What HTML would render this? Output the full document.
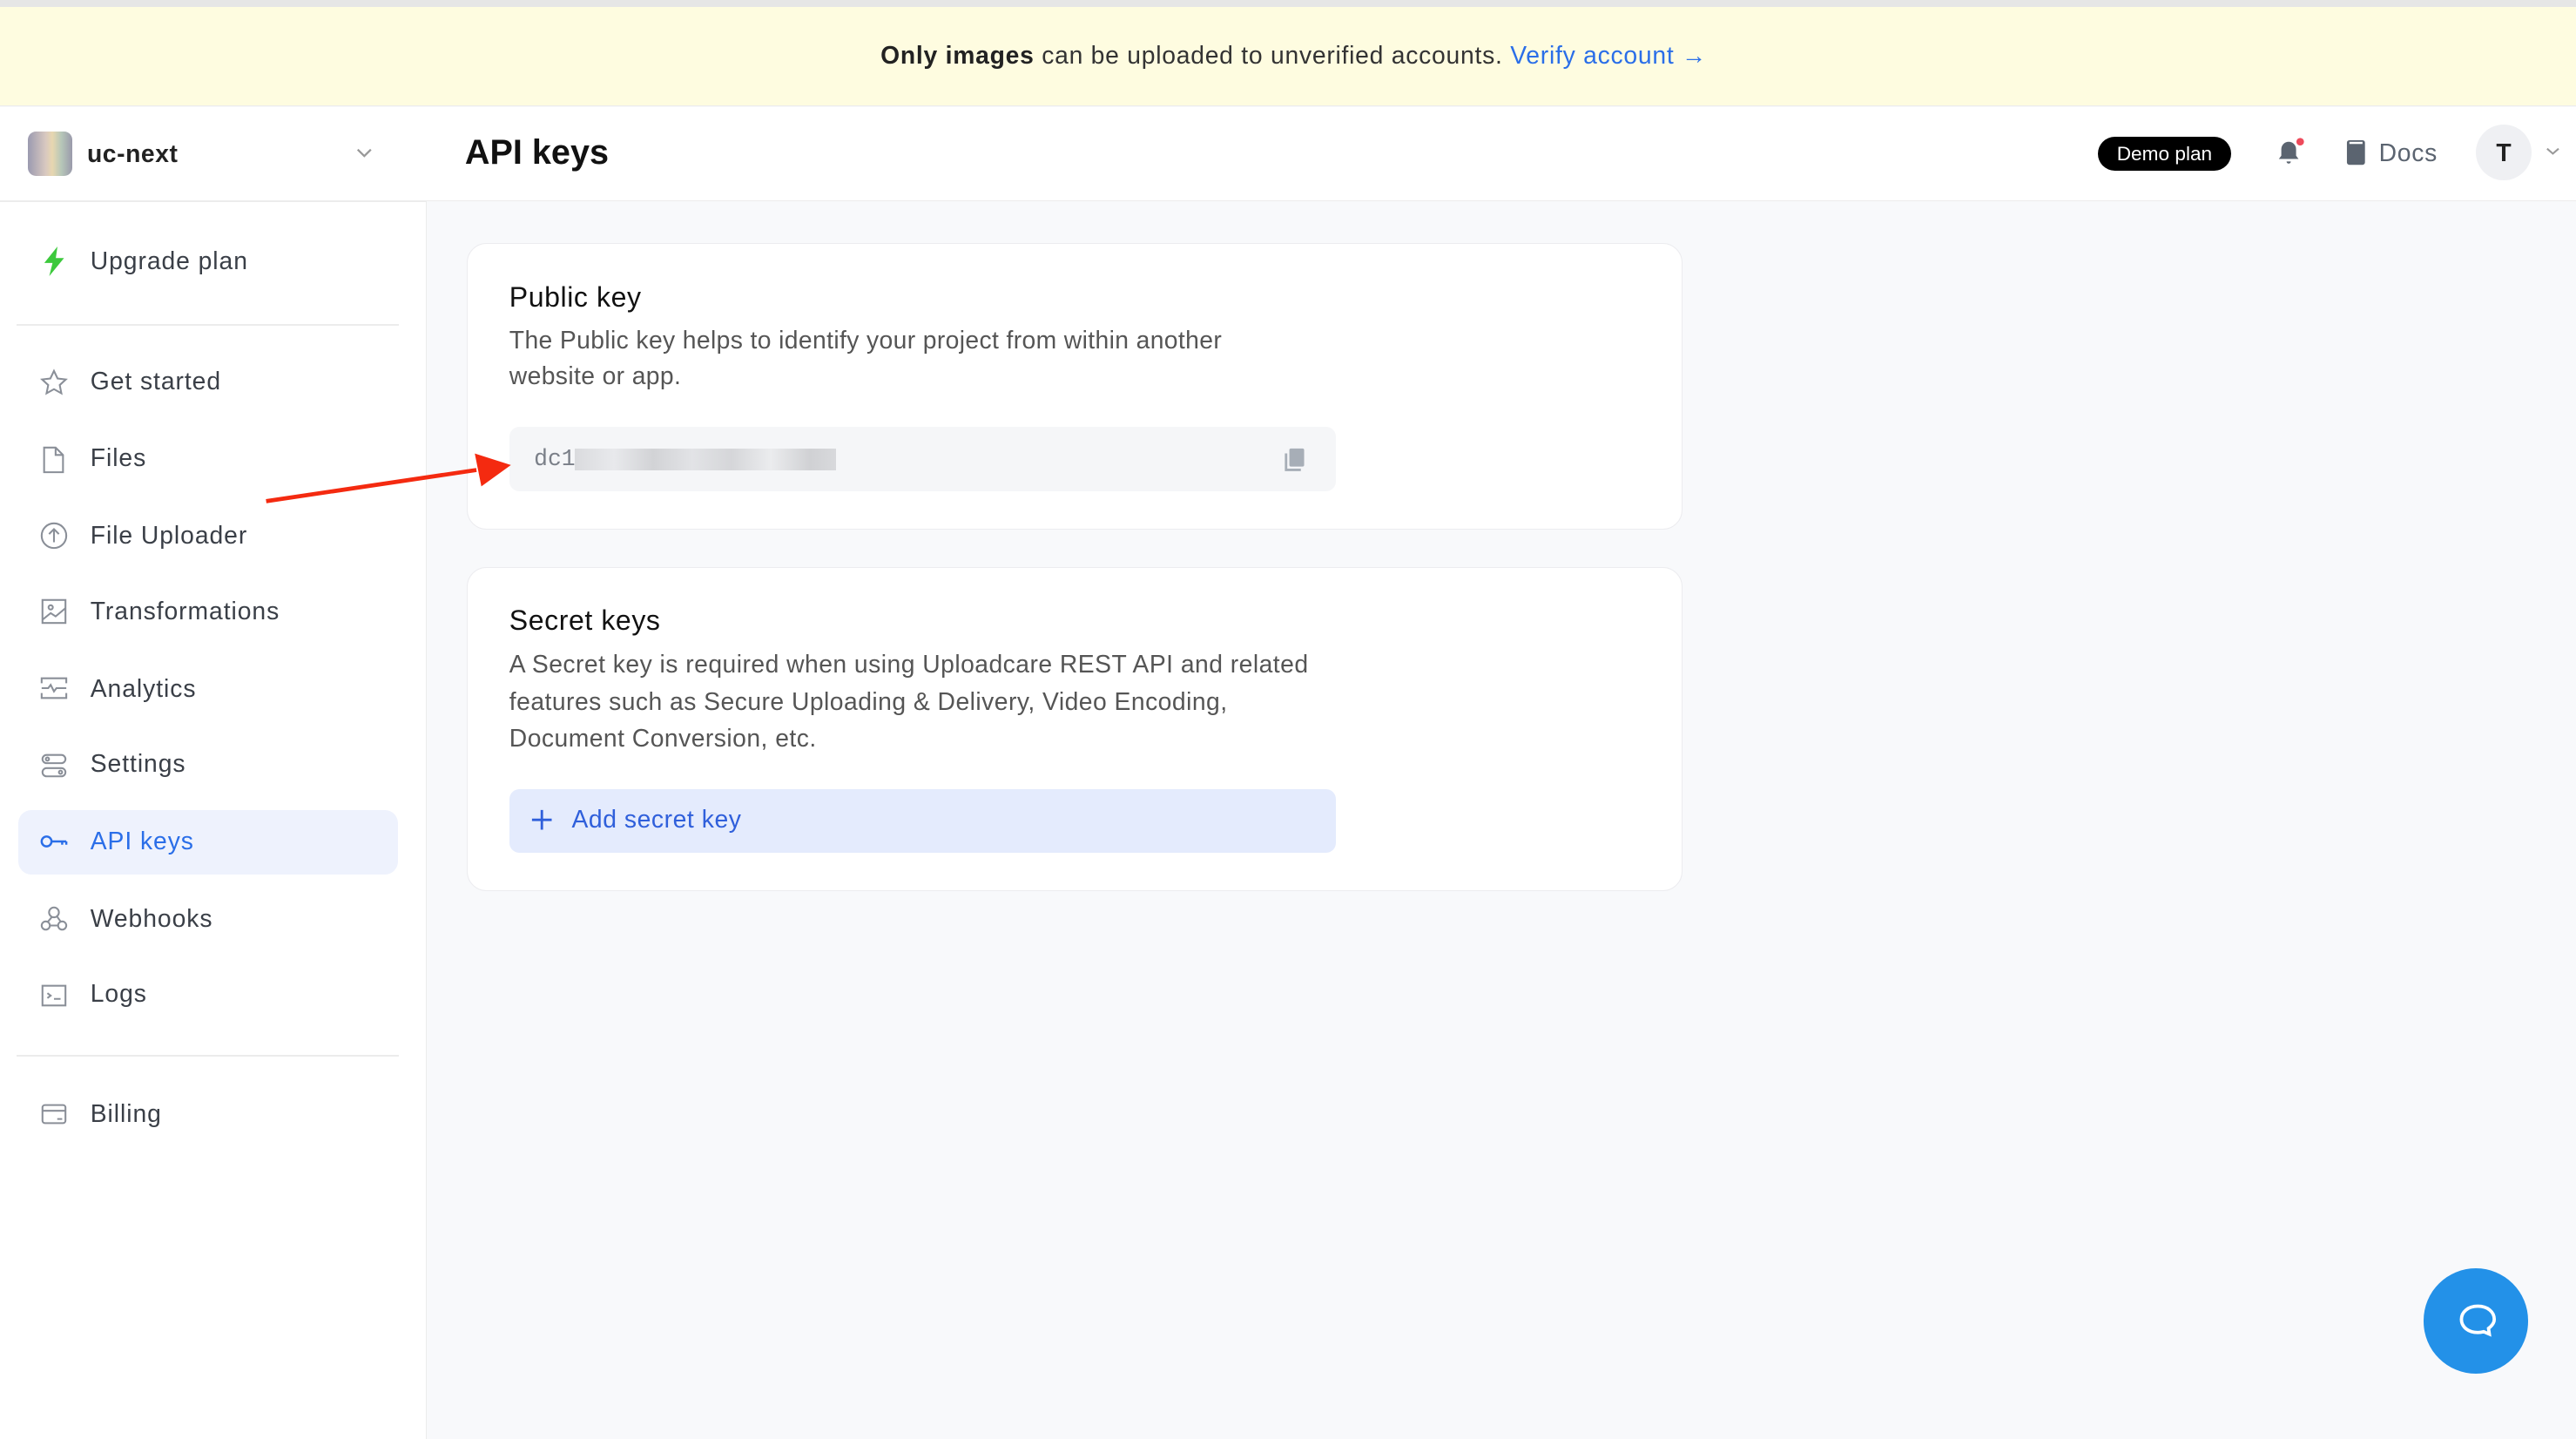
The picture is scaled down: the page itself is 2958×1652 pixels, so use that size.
<!DOCTYPE html>
<html><head><meta charset="utf-8"><style>
html,body{margin:0;padding:0;width:2958px;height:1652px;overflow:hidden;background:#f8f9fb}
#w{zoom:1.88648;width:1568px;height:876px;position:relative;font-family:"Liberation Sans",sans-serif;color:#333;background:#f8f9fb}
.a{position:absolute}
.nav{position:absolute;left:55px;font-size:15px;color:#3a3f47;line-height:20px;letter-spacing:0.5px}
.ic{position:absolute;left:24px;width:18px;height:18px}
.card{position:absolute;left:284px;width:739px;background:#fff;border:1px solid #ececef;border-radius:12px}
</style></head><body><div id="w">
<div class="a" style="left:0;top:0;width:1568px;height:4px;background:#e6e6e6"></div>
<div class="a" style="left:0;top:4px;width:1568px;height:60px;background:#fefce0;border-bottom:1px solid #ececec"></div>
<div class="a" style="left:0;top:24px;width:1575px;text-align:center;font-size:15px;line-height:20px;color:#333;letter-spacing:0.4px"><b style="color:#222">Only images</b> can be uploaded to unverified accounts. <span style="color:#2a6ee8">Verify account →</span></div>

<div class="a" style="left:0;top:65px;width:259px;height:811px;background:#fff;border-right:1px solid #ececec"></div>
<div class="a" style="left:259px;top:65px;width:1309px;height:57px;background:#fff;border-bottom:1px solid #ececec"></div>
<div class="a" style="left:0;top:122px;width:259px;height:1px;background:#ececec"></div>

<div class="a" style="left:17px;top:80px;width:27px;height:27px;border-radius:5px;background:linear-gradient(90deg,#9b9ab0,#d8c8c0 40%,#e8d7b0 55%,#b7c7b8 75%,#9a9aab)"></div>
<div class="a" style="left:53px;top:84px;font-size:15px;font-weight:bold;color:#222;line-height:20px;letter-spacing:0.3px">uc-next</div>
<svg class="a" style="left:216px;top:88px" width="12" height="10" viewBox="0 0 12 10"><path d="M2 3l4 4 4-4" fill="none" stroke="#999" stroke-width="1.2"/></svg>

<svg class="a" style="left:26px;top:150px" width="15" height="18" viewBox="0 0 15 18"><path d="M9 0L1 10h5l-2 8 9-11H8z" fill="#3cc93c"/></svg>
<div class="nav" style="top:149px">Upgrade plan</div>
<div class="a" style="left:10px;top:197px;width:233px;height:1px;background:#ececec"></div>

<div class="a" style="left:11px;top:493px;width:231px;height:39px;background:#eef2fd;border-radius:8px"></div>

<svg class="ic" style="top:224px" viewBox="0 0 18 18" fill="none" stroke="#8a8f98" stroke-width="1.1"><path d="M9 1.5l2.2 4.6 5 .6-3.7 3.4 1 5L9 12.6 4.5 15.1l1-5L1.8 6.7l5-.6z"/></svg>
<div class="nav" style="top:222px">Get started</div>
<svg class="ic" style="top:271px" viewBox="0 0 18 18" fill="none" stroke="#8a8f98" stroke-width="1.1"><path d="M3 1.5h7l4.5 4.5v10.5H3z M10 1.5v4.5h4.5"/></svg>
<div class="nav" style="top:269px">Files</div>
<svg class="ic" style="top:317px" viewBox="0 0 18 18" fill="none" stroke="#8a8f98" stroke-width="1.1"><circle cx="9" cy="9" r="7.5"/><path d="M9 13V5M6 8l3-3 3 3"/></svg>
<div class="nav" style="top:316px">File Uploader</div>
<svg class="ic" style="top:363px" viewBox="0 0 18 18" fill="none" stroke="#8a8f98" stroke-width="1.1"><rect x="2" y="2" width="14" height="14"/><circle cx="7" cy="6.5" r="1.3"/><path d="M2 14l5-4 3 2 6-5"/></svg>
<div class="nav" style="top:362px">Transformations</div>
<svg class="ic" style="top:410px" viewBox="0 0 18 18" fill="none" stroke="#8a8f98" stroke-width="1.1"><path d="M1.5 6V3h15v3M1.5 12v3h15v-3M1.5 9h4l1.5-2 2 4 1.5-2h6"/></svg>
<div class="nav" style="top:409px">Analytics</div>
<svg class="ic" style="top:457px" viewBox="0 0 18 18" fill="none" stroke="#8a8f98" stroke-width="1.1"><rect x="2" y="2.5" width="14" height="5" rx="2.5"/><rect x="2" y="10.5" width="14" height="5" rx="2.5"/><circle cx="5" cy="5" r="1"/><circle cx="13" cy="13" r="1"/></svg>
<div class="nav" style="top:455px">Settings</div>
<svg class="ic" style="top:503px" viewBox="0 0 18 18" fill="none" stroke="#2a6ee8" stroke-width="1.3"><circle cx="4.5" cy="9" r="3"/><path d="M7.5 9h9M14 9v2M16.5 9v2"/></svg>
<div class="nav" style="top:502px;color:#2a6ee8">API keys</div>
<svg class="ic" style="top:550px" viewBox="0 0 18 18" fill="none" stroke="#8a8f98" stroke-width="1.1"><circle cx="9" cy="5" r="3"/><circle cx="4" cy="13" r="2.5"/><circle cx="14" cy="13" r="2.5"/><path d="M8 7.5L5 11M10.5 7L13 10.5M6.5 13h5"/></svg>
<div class="nav" style="top:549px">Webhooks</div>
<svg class="ic" style="top:597px" viewBox="0 0 18 18" fill="none" stroke="#8a8f98" stroke-width="1.1"><rect x="2" y="3" width="14" height="12"/><path d="M5 7.5l2 1.5-2 1.5M9 11h4"/></svg>
<div class="nav" style="top:595px">Logs</div>
<div class="a" style="left:10px;top:642px;width:233px;height:1px;background:#ececec"></div>
<svg class="ic" style="top:669px" viewBox="0 0 18 18" fill="none" stroke="#8a8f98" stroke-width="1.1"><rect x="2" y="3.5" width="14" height="11" rx="1.5"/><path d="M2 7h14M11 12h3"/></svg>
<div class="nav" style="top:668px">Billing</div>

<div class="a" style="left:283px;top:80px;font-size:21px;font-weight:bold;color:#111;line-height:26px">API keys</div>
<div class="a" style="left:1277px;top:83px;width:81px;height:21px;background:#000;border-radius:11px;color:#fff;font-size:12px;line-height:21px;text-align:center">Demo plan</div>
<svg class="a" style="left:1385px;top:84px" width="18" height="18" viewBox="0 0 18 18"><path d="M8 2.5a4.5 4.5 0 0 0-4.5 4.5v4L2 13h12l-1.5-2V7A4.5 4.5 0 0 0 8 2.5z M6.7 14.5a1.3 1.3 0 0 0 2.6 0z" fill="#5b6470"/><circle cx="15" cy="2.5" r="2.3" fill="#ee4a5b"/></svg>
<svg class="a" style="left:1428px;top:85px" width="12" height="16" viewBox="0 0 12 16"><rect x="0.5" y="0.5" width="11" height="15" rx="1.5" fill="#5b6470"/><rect x="2" y="1.5" width="8" height="1.3" fill="#fff"/></svg>
<div class="a" style="left:1448px;top:83px;font-size:15px;line-height:20px;color:#5b6470;letter-spacing:0.4px">Docs</div>
<div class="a" style="left:1507px;top:76px;width:34px;height:34px;border-radius:50%;background:#eff0f3;text-align:center;line-height:34px;font-weight:bold;font-size:15px;color:#222">T</div>
<svg class="a" style="left:1549px;top:88px" width="10" height="8" viewBox="0 0 10 8"><path d="M1.5 2.5l3.5 3 3.5-3" fill="none" stroke="#999" stroke-width="1.1"/></svg>

<div class="card" style="top:148px;height:173px"></div>
<div class="a" style="left:310px;top:170px;font-size:17px;color:#111;line-height:22px;letter-spacing:0.3px">Public key</div>
<div class="a" style="left:310px;top:196px;width:460px;font-size:15px;color:#555;line-height:22px;letter-spacing:0.2px">The Public key helps to identify your project from within another website or app.</div>
<div class="a" style="left:310px;top:260px;width:503px;height:39px;background:#f5f6f8;border-radius:6px"></div>
<div class="a" style="left:325px;top:271px;font-family:'Liberation Mono',monospace;font-size:14px;color:#7a7f88;line-height:18px">dc1</div>
<div class="a" style="left:350px;top:273px;width:159px;height:13px;background:linear-gradient(90deg,#dadbde,#e8e9ec 15%,#d2d3d6 30%,#e2e3e6 45%,#d5d6d9 60%,#ebecee 75%,#d0d1d4 90%,#d8d9dc)"></div>
<svg class="a" style="left:781px;top:272px" width="14" height="16" viewBox="0 0 14 16"><rect x="4" y="1" width="9" height="11" rx="1" fill="#a7aeb7"/><path d="M2 4v10h9" fill="none" stroke="#a7aeb7" stroke-width="1.5"/></svg>

<div class="card" style="top:345px;height:196px"></div>
<div class="a" style="left:310px;top:367px;font-size:17px;color:#111;line-height:22px;letter-spacing:0.3px">Secret keys</div>
<div class="a" style="left:310px;top:393px;width:495px;font-size:15px;color:#555;line-height:22.5px;letter-spacing:0.25px">A Secret key is required when using Uploadcare REST API and related features such as Secure Uploading &amp; Delivery, Video Encoding, Document Conversion, etc.</div>
<div class="a" style="left:310px;top:480px;width:503px;height:39px;background:#e4ebfd;border-radius:6px"></div>
<svg class="a" style="left:323px;top:492px" width="14" height="14" viewBox="0 0 14 14"><path d="M7 1v12M1 7h12" stroke="#2f5fdb" stroke-width="1.5"/></svg>
<div class="a" style="left:348px;top:489px;font-size:15px;color:#2f5fdb;line-height:20px;letter-spacing:0.3px">Add secret key</div>

<svg class="a" style="left:0;top:0" width="1568" height="876"><path d="M162 305L290 286" stroke="#f42a10" stroke-width="2.5"/><path d="M311 283L289 276L293 296Z" fill="#f42a10"/></svg>

<div class="a" style="left:1475px;top:772px;width:64px;height:64px;border-radius:50%;background:#2391e8"></div>
<svg class="a" style="left:1493px;top:791px" width="30" height="28" viewBox="0 0 30 28"><path d="M15 4c-6 0-10 3.5-10 8s4 8 10 8c1.5 0 2.5-.2 3.5-.5L22 21l-.5-3.5c2-1.5 3.5-3.5 3.5-5.5 0-4.5-4-8-10-8z" fill="none" stroke="#fff" stroke-width="2"/></svg>
</div></body></html>
